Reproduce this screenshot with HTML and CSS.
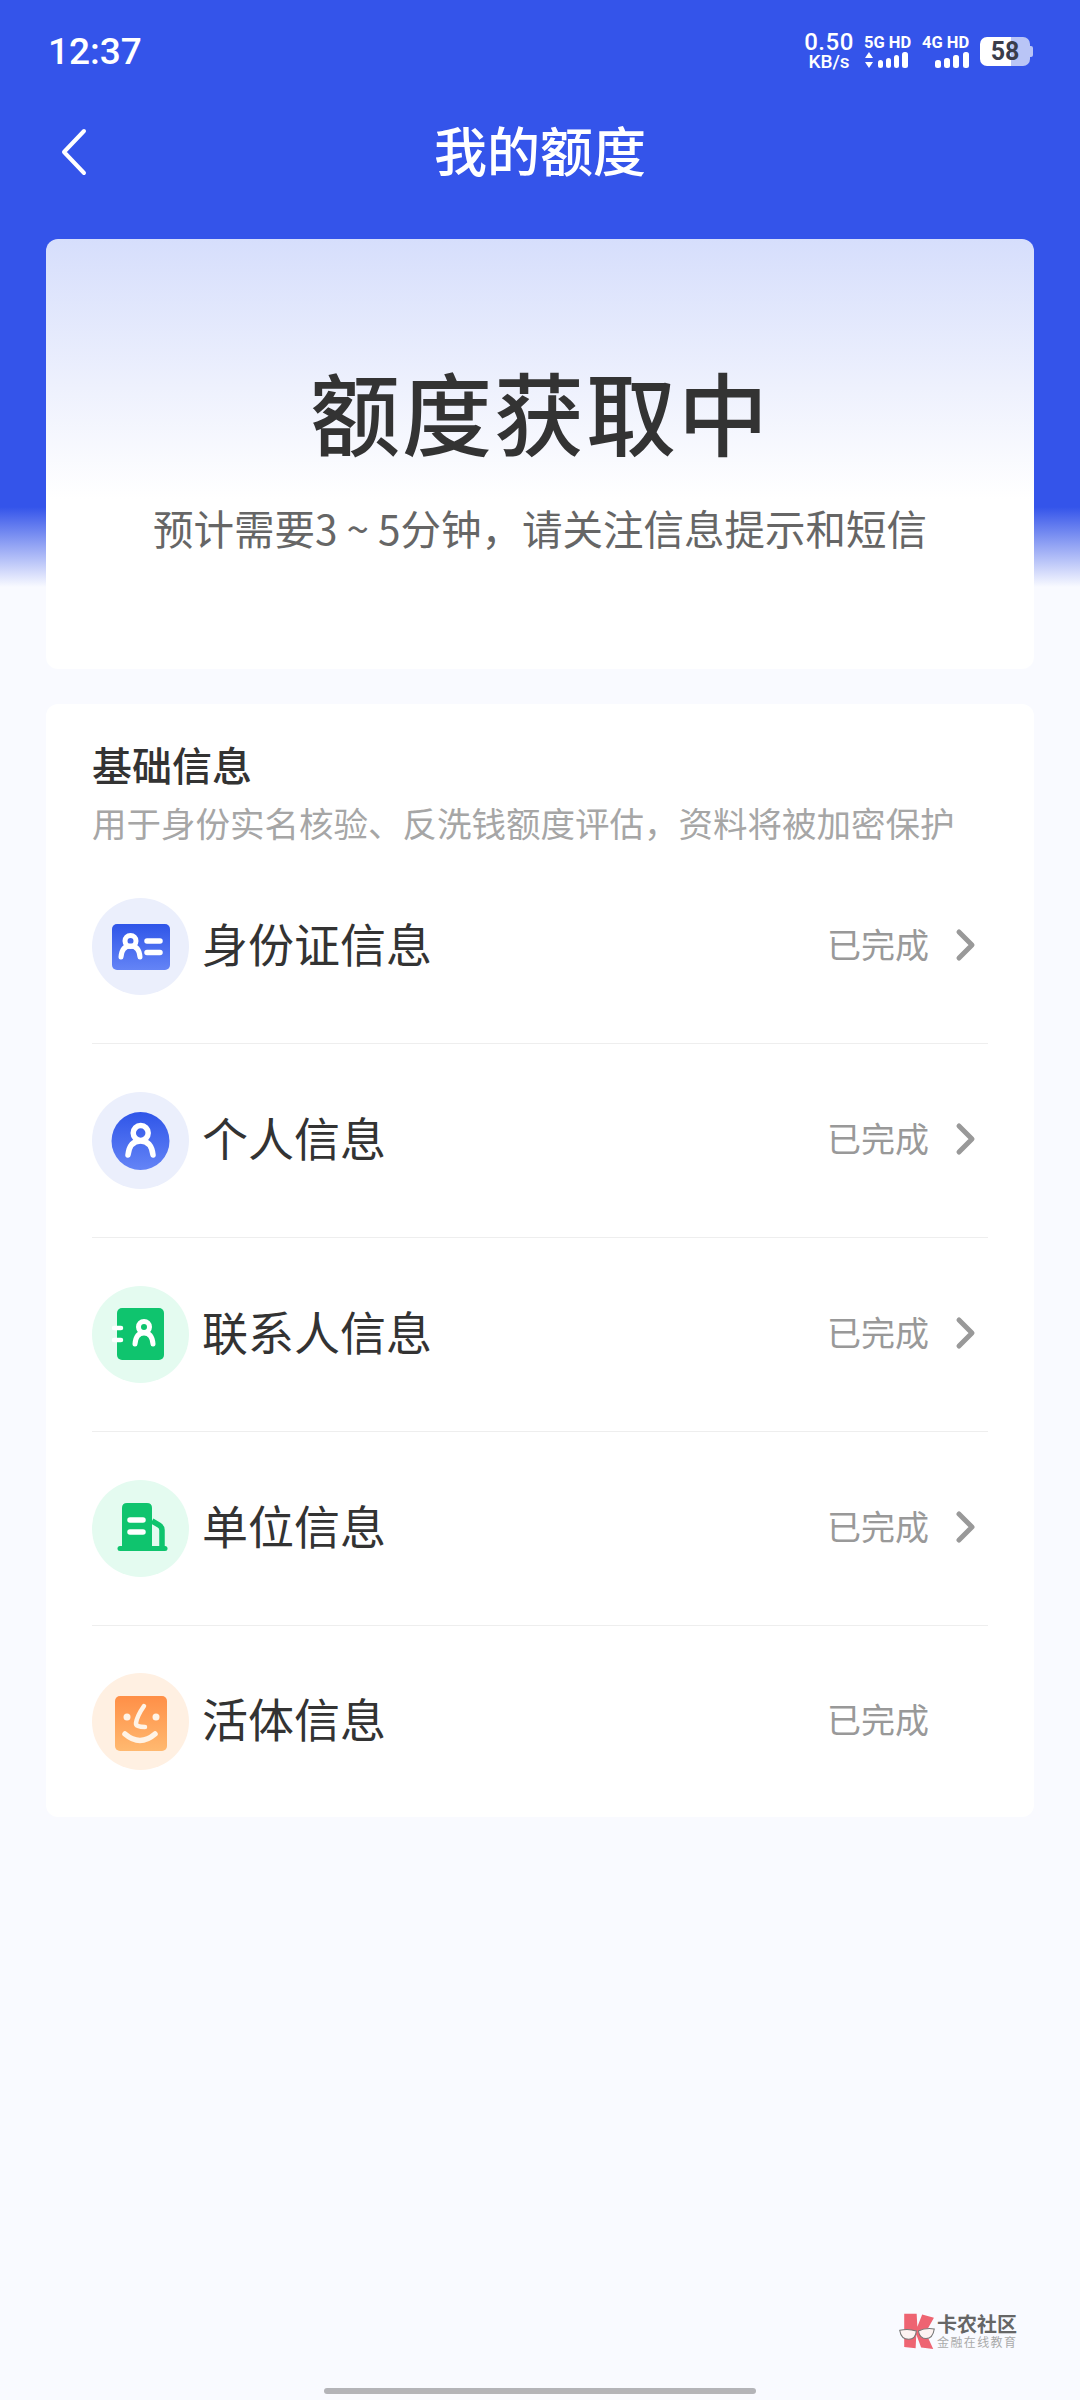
FILE: index.html
```html
<!DOCTYPE html>
<html lang="zh-CN">
<head>
  <meta charset="UTF-8">
  <meta name="viewport" content="width=device-width, initial-scale=1.0">
  <title>我的额度</title>
  <link rel="stylesheet" href="styles.css">
</head>
<body>
  <div class="status-bar">
    <span class="time">12:37</span>
    <div class="status-right">
      <div class="net-speed">
        <span class="net-num">0.50</span>
        <span class="net-unit">KB/s</span>
      </div>
      <div class="sim">
        <span class="sim-label">5G HD</span>
        <svg class="sim-bars" width="48" height="18" viewBox="0 0 48 18">
          <path d="M5 1l4 6H1zM5 17l4-6H1z" fill="#fff"/>
          <g fill="#fff">
            <rect x="14" y="9" width="5" height="8" rx="2.5"/>
            <rect x="22" y="7" width="5" height="10" rx="2.5"/>
            <rect x="30" y="4" width="5" height="13" rx="2.5"/>
            <rect x="38" y="1" width="6" height="16" rx="2.5"/>
          </g>
        </svg>
      </div>
      <div class="sim">
        <span class="sim-label">4G HD</span>
        <svg class="sim-bars" width="48" height="18" viewBox="0 0 48 18">
          <g fill="#fff">
            <rect x="13" y="9" width="6" height="8" rx="2.5"/>
            <rect x="22" y="7" width="6" height="10" rx="2.5"/>
            <rect x="31" y="4" width="6" height="13" rx="2.5"/>
            <rect x="41" y="1" width="6" height="16" rx="2.5"/>
          </g>
        </svg>
      </div>
      <div class="battery">58</div>
    </div>
  </div>

  <div class="nav">
    <svg class="back" width="30" height="48" viewBox="0 0 30 48">
      <path d="M26 3L6 24l20 21" fill="none" stroke="#fff" stroke-width="4" stroke-linecap="round" stroke-linejoin="round"/>
    </svg>
    <h1 class="nav-title">我的额度</h1>
  </div>

  <div class="hero card">
    <div class="hero-title">额度获取中</div>
    <div class="hero-sub">预计需要3 ~ 5分钟，请关注信息提示和短信</div>
  </div>

  <div class="info card">
    <div class="info-title">基础信息</div>
    <div class="info-sub">用于身份实名核验、反洗钱额度评估，资料将被加密保护</div>

    <div class="row">
      <svg class="row-icon" width="97" height="97" viewBox="0 0 97 97">
        <defs>
          <linearGradient id="blue" x1="0" y1="0" x2="0" y2="1">
            <stop offset="0" stop-color="#2f55e8"/>
            <stop offset="1" stop-color="#6484f6"/>
          </linearGradient>
        </defs>
        <circle cx="48.5" cy="48.5" r="48.5" fill="#ebeffc"/>
        <rect x="20" y="26" width="58" height="46" rx="5" fill="url(#blue)"/>
        <circle cx="38.5" cy="43" r="5.500" fill="none" stroke="#fff" stroke-width="5"/>
        <path d="M29 59c.5-7 3.500-11 9.500-11s9 4 9.500 11" fill="none" stroke="#fff" stroke-width="5" stroke-linecap="round"/>
        <path d="M55 43h13M55 54.500h13" stroke="#fff" stroke-width="5.500" stroke-linecap="round"/>
      </svg>
      <span class="row-name">身份证信息</span>
      <span class="row-state">已完成</span>
      <svg class="row-arrow" width="59" height="40" viewBox="0 0 59 40">
        <path d="M30 5l13 13-13 13" fill="none" stroke="#999" stroke-width="5" stroke-linecap="round" stroke-linejoin="round"/>
      </svg>
    </div>

    <div class="row">
      <svg class="row-icon" width="97" height="97" viewBox="0 0 97 97">
        <circle cx="48.500" cy="48.500" r="48.500" fill="#ebeffc"/>
        <circle cx="48.500" cy="49" r="29" fill="url(#blue)"/>
        <circle cx="48.700" cy="41" r="7.500" fill="none" stroke="#fff" stroke-width="5.500"/>
        <path d="M36 63c1-9 5-14 12.500-14s11.500 5 12.500 14" fill="none" stroke="#fff" stroke-width="5.500" stroke-linecap="round"/>
      </svg>
      <span class="row-name">个人信息</span>
      <span class="row-state">已完成</span>
      <svg class="row-arrow" width="59" height="40" viewBox="0 0 59 40">
        <path d="M30 5l13 13-13 13" fill="none" stroke="#999" stroke-width="5" stroke-linecap="round" stroke-linejoin="round"/>
      </svg>
    </div>

    <div class="row">
      <svg class="row-icon" width="97" height="97" viewBox="0 0 97 97">
        <circle cx="48.500" cy="48.500" r="48.500" fill="#e4fbf0"/>
        <rect x="25" y="22" width="47" height="52" rx="5" fill="#0fc46e"/>
        <path d="M22 42h7M22 54h7" stroke="#fff" stroke-width="4.500" stroke-linecap="round"/>
        <circle cx="52" cy="41" r="5.500" fill="none" stroke="#fff" stroke-width="5"/>
        <path d="M43 58c.5-7 3.500-11 9-11s8.500 4 9 11" fill="none" stroke="#fff" stroke-width="5" stroke-linecap="round"/>
      </svg>
      <span class="row-name">联系人信息</span>
      <span class="row-state">已完成</span>
      <svg class="row-arrow" width="59" height="40" viewBox="0 0 59 40">
        <path d="M30 5l13 13-13 13" fill="none" stroke="#999" stroke-width="5" stroke-linecap="round" stroke-linejoin="round"/>
      </svg>
    </div>

    <div class="row">
      <svg class="row-icon" width="97" height="97" viewBox="0 0 97 97">
        <circle cx="48.500" cy="48.500" r="48.500" fill="#e4fbf0"/>
        <path d="M30 68V28q0-5 5-5h20q5 0 5 5v40z" fill="#0fc46e"/>
        <path d="M28 68.500h45" stroke="#0fc46e" stroke-width="5" stroke-linecap="round"/>
        <path d="M38 40h13M38 52h13" stroke="#fff" stroke-width="5.500" stroke-linecap="round"/>
        <path d="M60 41l7 4q3 2 3 5v18" fill="none" stroke="#0fc46e" stroke-width="5.500"/>
      </svg>
      <span class="row-name">单位信息</span>
      <span class="row-state">已完成</span>
      <svg class="row-arrow" width="59" height="40" viewBox="0 0 59 40">
        <path d="M30 5l13 13-13 13" fill="none" stroke="#999" stroke-width="5" stroke-linecap="round" stroke-linejoin="round"/>
      </svg>
    </div>

    <div class="row">
      <svg class="row-icon" width="97" height="97" viewBox="0 0 97 97">
        <defs>
          <linearGradient id="orange" x1="0" y1="0" x2="0" y2="1">
            <stop offset="0" stop-color="#ff8f47"/>
            <stop offset="1" stop-color="#ffb970"/>
          </linearGradient>
        </defs>
        <circle cx="48.500" cy="48.500" r="48.500" fill="#fff0e2"/>
        <rect x="23" y="23" width="52" height="55" rx="5" fill="url(#orange)"/>
        <circle cx="35" cy="44" r="3.500" fill="#fff3e6"/>
        <circle cx="64" cy="44" r="3.500" fill="#fff3e6"/>
        <path d="M52 33q-7 10-8 17-.5 4 9 4" fill="none" stroke="#fff3e6" stroke-width="4.500" stroke-linecap="round" stroke-linejoin="round"/>
        <path d="M33 61q15 13 30 0" fill="none" stroke="#fff3e6" stroke-width="5.500" stroke-linecap="round"/>
      </svg>
      <span class="row-name">活体信息</span>
      <span class="row-state">已完成</span>
      <span class="row-arrow"></span>
    </div>
  </div>

  <div class="watermark">
    <svg class="watermark-logo" width="38" height="38" viewBox="58 65 108 110">
      <path d="M75 70h36l2 38 14-36 34 10-24 42 22 48-35-4-14-38-2 40-33-4z" fill="#ee6472"/>
      <path d="M62 118q25-6 48 2-2 24-22 24-22 0-26-26zM116 120q20-10 46-6-4 28-24 28-18 0-22-22z" fill="#fdf3f2" stroke="#777" stroke-width="3"/>
    </svg>
    <div class="watermark-text">
      <span class="watermark-name">卡农社区</span>
      <span class="watermark-sub">金融在线教育</span>
    </div>
  </div>
  <div class="home-bar"></div>
</body>
</html>
```

FILE: styles.css
```css
* {
  box-sizing: border-box;
}
html, body {
  margin: 0;
  padding: 0;
}
body {
  position: relative;
  width: 1080px;
  height: 2400px;
  overflow: hidden;
  font-family: "Noto Sans CJK SC", "Noto Sans", sans-serif;
  color: #333;
  background: linear-gradient(#3454ea 0, #3454ea 507px, #f9faff 587px);
}

.status-bar {
  display: flex;
  justify-content: space-between;
  align-items: center;
  height: 100px;
  padding: 2px 48px 0 48px;
  color: #fff;
}
.time {
  font-family: Roboto, sans-serif;
  font-size: 37px;
  font-weight: 500;
}
.status-right {
  display: flex;
  align-items: center;
  gap: 10px;
}
.net-speed {
  display: flex;
  flex-direction: column;
  align-items: center;
  width: 50px;
  font-family: Roboto, sans-serif;
  font-weight: 500;
}
.net-num {
  font-size: 24px;
  line-height: 21px;
  letter-spacing: .5px;
}
.net-unit {
  font-size: 19px;
  line-height: 18px;
}
.sim {
  display: flex;
  flex-direction: column;
  align-items: flex-start;
  width: 48px;
  font-family: Roboto, sans-serif;
}
.sim-label {
  font-size: 16.500px;
  font-weight: 700;
  line-height: 17px;
  white-space: nowrap;
}
.battery {
  position: relative;
  width: 50px;
  height: 29px;
  margin-right: 2px;
  border-radius: 7px;
  text-align: center;
  font-family: Roboto, sans-serif;
  font-size: 25px;
  font-weight: 700;
  line-height: 29px;
  color: #3a3d4a;
  background: linear-gradient(90deg, #fff 0, #fff 62%, #b9c5f6 62%);
}
.battery::after {
  content: "";
  position: absolute;
  left: 50px;
  top: 9px;
  width: 3px;
  height: 11px;
  border-radius: 0 2px 2px 0;
  background: #b9c5f6;
}

.nav {
  position: relative;
  display: flex;
  align-items: center;
  justify-content: center;
  height: 104px;
  margin-bottom: 35px;
  padding-bottom: 6px;
}
.back {
  position: absolute;
  left: 58px;
  top: 28px;
}
.nav-title {
  margin: 0;
  font-size: 53px;
  font-weight: 500;
  color: #fff;
}

.card {
  margin: 0 46px;
  border-radius: 12px;
  background: #fff;
}
.hero {
  height: 430px;
  padding-top: 116px;
  text-align: center;
  background: linear-gradient(#d6defc 0, #eef1fd 150px, #fff 260px);
}
.hero-title {
  font-size: 90px;
  font-weight: 500;
  line-height: 110px;
  letter-spacing: 2px;
}
.hero-sub {
  margin-top: 33px;
  font-size: 40.500px;
  line-height: 60px;
  color: #666;
}

.info {
  margin-top: 35px;
  height: 1113px;
  padding: 35px 46px 0 46px;
}
.info-title {
  font-size: 40px;
  font-weight: 500;
  line-height: 50px;
}
.info-sub {
  margin-top: 8px;
  margin-bottom: 3px;
  font-size: 34.500px;
  line-height: 50px;
  white-space: nowrap;
  color: #a6a6a6;
}
.row {
  display: flex;
  align-items: center;
  height: 194px;
  border-bottom: 1px solid #eeeeee;
}
.row:last-child {
  height: 191px;
  border-bottom: 0;
}
.row-icon {
  flex: none;
  margin-right: 13px;
}
.row-name {
  margin-right: auto;
  padding-bottom: 10px;
  font-size: 46px;
}
.row-state {
  padding-bottom: 7px;
  font-size: 34px;
  color: #999;
}
.row-arrow {
  flex: none;
  width: 59px;
}

.watermark {
  position: absolute;
  left: 898px;
  top: 2312px;
  display: flex;
  align-items: center;
  gap: 1px;
}
.watermark-text {
  display: flex;
  flex-direction: column;
}
.watermark-name {
  font-size: 20px;
  font-weight: 700;
  line-height: 22px;
  color: #666;
}
.watermark-sub {
  font-size: 12px;
  line-height: 14px;
  letter-spacing: 1.400px;
  color: #aaa;
}
.home-bar {
  position: absolute;
  left: 324px;
  top: 2388px;
  width: 432px;
  height: 6px;
  border-radius: 3px;
  background: #b4b4b8;
}
```
